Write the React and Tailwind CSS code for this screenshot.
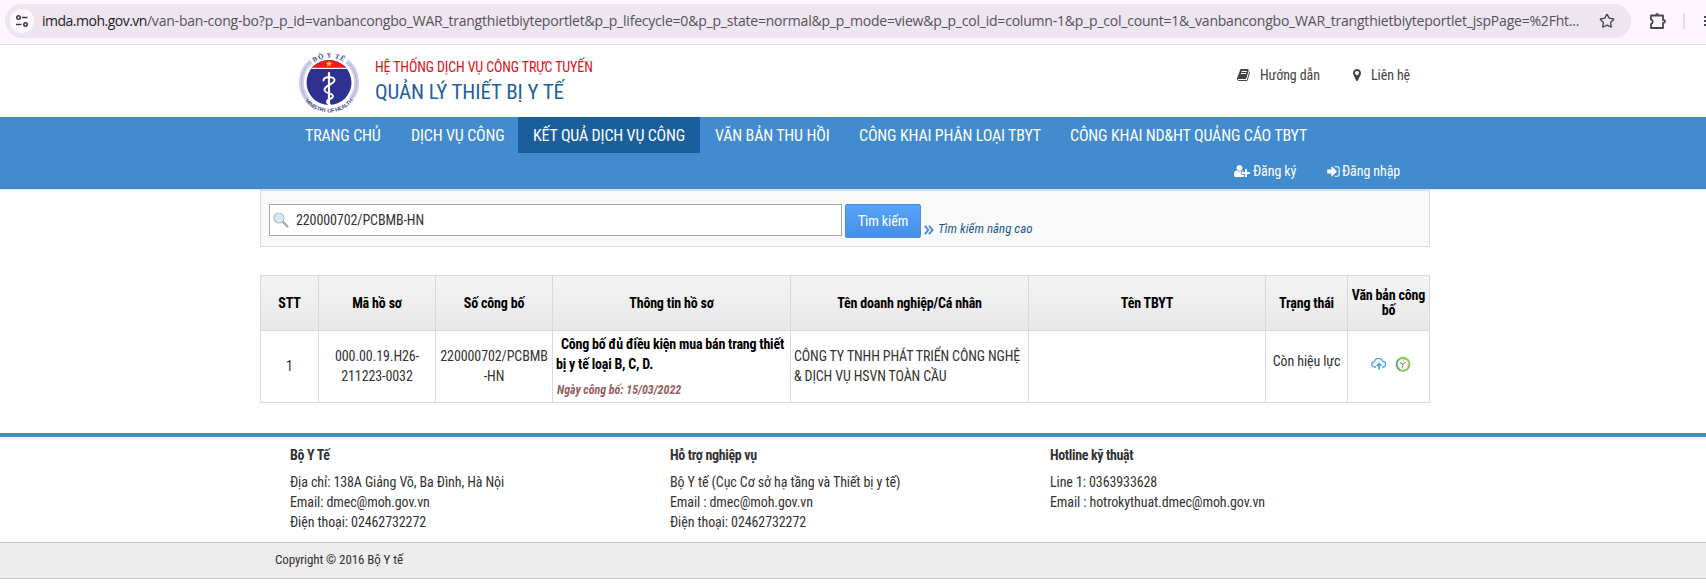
import { Star } from 'lucide-react';

const menu = [
  { label: 'TRANG CHỦ', cls: 'w-[106px]' },
  { label: 'DỊCH VỤ CÔNG', cls: 'w-[122px]' },
  { label: 'KẾT QUẢ DỊCH VỤ CÔNG', cls: 'w-[182px]', active: true },
  { label: 'VĂN BẢN THU HỒI', cls: 'w-[144px]' },
  { label: 'CÔNG KHAI PHÂN LOẠI TBYT', cls: 'w-[211px]' },
  { label: 'CÔNG KHAI ND&HT QUẢNG CÁO TBYT', cls: 'w-[267px]' },
];

const columns = [
  'STT',
  'Mã hồ sơ',
  'Số công bố',
  'Thông tin hồ sơ',
  'Tên doanh nghiệp/Cá nhân',
  'Tên TBYT',
  'Trạng thái',
  'Văn bản công bố',
];

const footerCols = [
  {
    title: 'Bộ Y Tế',
    lines: ['Địa chỉ: 138A Giảng Võ, Ba Đình, Hà Nội', 'Email: dmec@moh.gov.vn', 'Điện thoại: 02462732272'],
  },
  {
    title: 'Hỗ trợ nghiệp vụ',
    lines: ['Bộ Y tế (Cục Cơ sở hạ tầng và Thiết bị y tế)', 'Email : dmec@moh.gov.vn', 'Điện thoại: 02462732272'],
  },
  {
    title: 'Hotline kỹ thuật',
    lines: ['Line 1: 0363933628', 'Email : hotrokythuat.dmec@moh.gov.vn'],
  },
];

const grid = 'grid grid-cols-[58px_117px_117px_238px_238px_237px_82px_82px]';

function BookIcon() {
  return (
    <svg viewBox="0 0 1792 1792" className="w-[14px] h-[14px] fill-current">
      <path d="M1639 478q40 57 18 129l-275 906q-19 64-76.5 107.5t-122.5 43.5h-923q-77 0-148.5-53.5t-99.5-131.5q-24-67-2-127 0-4 3-27t4-37q1-8-3-21.5t-3-19.5q2-11 8-21t16.5-23.5 16.5-23.5q23-38 45-91.5t30-91.5q3-10 .5-30t-.5-28q3-11 17-28t17-23q21-36 42-92t25-90q1-9-2.5-32t.5-28q4-13 22-30.5t22-22.5q19-26 42.5-84.5t27.5-96.5q1-8-3-25.5t-2-26.5q2-8 9-18t18-23 17-21q8-12 16.5-30.5t15-35 16-36 19.5-32 26.5-23.5 36-11.5 47.5 5.5l-1 3q38-9 51-9h761q74 0 114 56t18 130l-274 906q-36 119-71.5 153.5t-128.5 34.5h-869q-27 0-38 15-11 16-1 43 24 70 144 70h923q29 0 56-15.5t35-41.5l300-987q7-22 5-57 38 15 59 43zm-1064 2q-4 13 2 22.5t20 9.5h608q13 0 25.5-9.5t16.5-22.5l21-64q4-13-2-22.5t-20-9.5h-608q-13 0-25.5 9.5t-16.5 22.5zm-83 256q-4 13 2 22.5t20 9.5h608q13 0 25.5-9.5t16.5-22.5l21-64q4-13-2-22.5t-20-9.5h-608q-13 0-25.5 9.5t-16.5 22.5z" />
    </svg>
  );
}

function MarkerIcon() {
  return (
    <svg viewBox="384 128 1024 1536" className="w-[8px] h-[12px] fill-current">
      <path d="M1152 640q0-106-75-181t-181-75-181 75-75 181 75 181 181 75 181-75 75-181zm256 0q0 109-33 179l-364 774q-16 33-47.5 52t-67.5 19-67.5-19-46.5-52l-365-774q-33-70-33-179 0-212 150-362t362-150 362 150 150 362z" />
    </svg>
  );
}

function UserPlusIcon() {
  return (
    <svg viewBox="0 0 2048 1792" className="w-[16px] h-[14px] fill-current">
      <path d="M704 896q-159 0-271.5-112.5t-112.5-271.5 112.5-271.5 271.5-112.5 271.5 112.5 112.5 271.5-112.5 271.5-271.5 112.5zm960 128h352q13 0 22.5 9.5t9.5 22.5v192q0 13-9.5 22.5t-22.5 9.5h-352v352q0 13-9.5 22.5t-22.5 9.5h-192q-13 0-22.5-9.5t-9.5-22.5v-352h-352q-13 0-22.5-9.5t-9.5-22.5v-192q0-13 9.5-22.5t22.5-9.5h352v-352q0-13 9.5-22.5t22.5-9.5h192q13 0 22.5 9.5t9.5 22.5v352zm-736 224q0 52 38 90t90 38h256v238q-68 50-171 50h-874q-121 0-194-69t-73-190q0-53 3.5-103.5t14-109 26.5-108.5 43-97.5 62-81 85.5-53.5 111.5-20q19 0 39 17 79 61 154.5 91.5t164.5 30.5 164.5-30.5 154.5-91.5q20-17 39-17 132 0 217 96h-223q-52 0-90 38t-38 90v192z" />
    </svg>
  );
}

function SignInIcon() {
  return (
    <svg viewBox="100 100 1600 1600" className="w-[13px] h-[13px] fill-current">
      <path d="M1312 896q0 26-19 45l-544 544q-19 19-45 19t-45-19-19-45v-288h-448q-26 0-45-19t-19-45v-384q0-26 19-45t45-19h448v-288q0-26 19-45t45-19 45 19l544 544q19 19 19 45zm352-352v704q0 119-84.5 203.5t-203.5 84.5h-320q-13 0-22.5-9.5t-9.5-22.5q0-4-1-20t-.5-26.5 3-23.5 10-19.5 20.5-6.5h320q66 0 113-47t47-113v-704q0-66-47-113t-113-47h-312l-11.5-1-11.5-3-8-5.5-7-9-2-13.5q0-4-1-20t-.5-26.5 3-23.5 10-19.5 20.5-6.5h320q119 0 203.5 84.5t84.5 203.5z" />
    </svg>
  );
}

function Logo() {
  return (
    <svg viewBox="0 0 64 64" className="w-[64px] h-[64px]">
      <defs>
        <path id="arcTop" d="M7 32.5 A25 25 0 0 1 57 32.5" />
        <path id="arcBottom" d="M2 32.5 A30 30 0 0 0 62 32.5" />
        <clipPath id="disc"><circle cx="32" cy="32.5" r="22.5" /></clipPath>
      </defs>
      {/* vòng cung hai bên */}
      <g fill="none" stroke="#d0d1e6">
        <path d="M14 11.500 A27.500 27.500 0 0 0 10 49" strokeWidth="5" />
        <path d="M50 11.500 A27.500 27.500 0 0 1 54 49" strokeWidth="5" />
      </g>
      <g fill="none" stroke="#a9abd2" strokeWidth=".9">
        <path d="M14 11.500 A27.500 27.500 0 0 0 10 49" />
        <path d="M50 11.500 A27.500 27.500 0 0 1 54 49" />
      </g>
      <g clipPath="url(#disc)">
        <rect width="64" height="64" fill="#2e3192" />
        <rect width="64" height="18" fill="#ed1c24" />
        <rect y="17.800" width="64" height="1.200" fill="#fff" />
      </g>
      <path fill="#fff200" d="M32 10.500l.8 2.200h2.400l-1.900 1.500.7 2.300-2-1.400-2 1.400.7-2.300-1.900-1.500h2.400z" />
      <path d="M32 23 V56" stroke="#fff" strokeWidth="2.200" strokeLinecap="round" />
      <path d="M26.500 30.500 C26 26.500 36 26 37.500 29.500 C39 34 27 35 27.500 40 C28 44 36.500 43 36 46.500 C35.500 49.500 29.500 49 30 52 C30.300 54 33 54 33 55" fill="none" stroke="#fff" strokeWidth="1.900" strokeLinecap="round" />
      <text fontSize="7" fontWeight="700" fill="#4a4d96" fontFamily="Liberation Serif, serif" letterSpacing=".6">
        <textPath href="#arcTop" startOffset="50%" textAnchor="middle">BỘ Y TẾ</textPath>
      </text>
      <text fontSize="5.500" fontWeight="700" fill="#4a4d96" fontFamily="Liberation Sans, sans-serif" letterSpacing="-.2">
        <textPath href="#arcBottom" startOffset="50%" textAnchor="middle">MINISTRY OF HEALTH</textPath>
      </text>
    </svg>
  );
}

function BrowserBar() {
  return (
    <div className="h-[45px] bg-[#fdf5fd] border-b border-[#e0dce4] flex items-start pt-1 pl-[5px] overflow-hidden">
      <div className="w-[1626px] h-[34px] shrink-0 rounded-full bg-[#ede5ef] flex items-center pl-[5px]">
        <div className="w-6 h-6 rounded-full bg-[#fdf8fd] flex items-center justify-center shrink-0">
          <svg viewBox="0 0 14 14" className="w-[14px] h-[14px]" fill="none" stroke="#3c3a40" strokeWidth="1.600">
            <circle cx="3.500" cy="3.500" r="1.700" />
            <path d="M7 3.500h5.500M1 10.500h5.500" />
            <circle cx="10.500" cy="10.500" r="1.700" />
          </svg>
        </div>
        <div className="ml-2 w-[1546px] shrink-0 whitespace-nowrap font-['Open_Sans',sans-serif] text-[14px] tracking-[-0.21px] text-[#55525a]">
          <span className="text-[#1f1d22] tracking-[-0.5px]">imda.moh.gov.vn</span>/van-ban-cong-bo?p_p_id=vanbancongbo_WAR_trangthietbiyteportlet&p_p_lifecycle=0&p_p_state=normal&p_p_mode=view&p_p_col_id=column-1&p_p_col_count=1&_vanbancongbo_WAR_trangthietbiyteportlet_jspPage=%2Fht...
        </div>
        <Star className="w-[16px] h-[16px] ml-[11px] text-[#47444c] shrink-0" />
      </div>
      <svg viewBox="0 0 18 18" className="w-[18px] h-[18px] ml-[18px] mt-2 shrink-0" fill="none" stroke="#47444c" strokeWidth="1.800">
        <path d="M2 3.500h12v4.500h0.500a1.400 1.400 0 0 1 0 2.800H14V16H2v-4a2.400 2.400 0 0 0 0-4.600z" strokeLinejoin="round" />
        <path d="M6.300 2.800a1.700 1.700 0 0 1 3.400 0z" fill="#47444c" stroke="none" />
      </svg>
      <div className="w-[2px] h-4 ml-[16px] mt-[9px] bg-[#e9d9ec] shrink-0" />
      <div className="ml-[19px] mt-3 w-3 h-[10px] border-y-2 border-[#47444c] shrink-0 flex items-center">
        <div className="w-3 h-[2px] bg-[#47444c]" />
      </div>
    </div>
  );
}

export default function App() {
  return (
    <div className="w-[1706px] h-[586px] overflow-hidden bg-white font-['Roboto_Condensed','Roboto',sans-serif] text-[14px] leading-5 tracking-[-0.1px] text-[#333]">
      <BrowserBar />

      {/* Header */}
      <div className="h-[72px] pl-[297px] flex">
        <div className="pt-[5px]"><Logo /></div>
        <div className="ml-[14px] pt-[12px] w-[862px] whitespace-nowrap tracking-[-0.13px]">
          <div className="leading-5 text-[#e0101c]">HỆ THỐNG DỊCH VỤ CÔNG TRỰC TUYẾN</div>
          <div className="text-[21px] leading-[30px] tracking-[-0.08px] text-[#23609a]">QUẢN LÝ THIẾT BỊ Y TẾ</div>
        </div>
        <div className="flex items-center h-5 mt-5 text-[#444] whitespace-nowrap">
          <div className="w-[23px]"><BookIcon /></div>
          <div className="w-[93px]">Hướng dẫn</div>
          <div className="w-[18px]"><MarkerIcon /></div>
          <div>Liên hệ</div>
        </div>
      </div>

      {/* Menu */}
      <div className="h-[73px] bg-[#428bce] border-b border-[#d3e5f5] text-white">
        <div className="flex h-9 pl-[290px] text-[16px] leading-[37px] tracking-[-0.16px] whitespace-nowrap">
          {menu.map(m => (
            <div key={m.label} className={`${m.cls} h-9 pl-[15px] ${m.active ? 'bg-[#1a5f9c]' : ''}`}>{m.label}</div>
          ))}
        </div>
        <div className="flex h-9 items-center pl-[1234px] whitespace-nowrap">
          <div className="w-[19px]"><UserPlusIcon /></div>
          <div className="w-[74px]">Đăng ký</div>
          <div className="w-[15px]"><SignInIcon /></div>
          <div>Đăng nhập</div>
        </div>
      </div>

      <div className="w-[1170px] ml-[260px]">
        {/* Tìm kiếm */}
        <div className="h-[57px] bg-[#f9f9f9] border border-[#ddd] pt-[13px] pl-2 flex items-start">
          <div className="w-[573px] h-8 bg-white border border-[#a9a9a9] flex items-center">
            <svg viewBox="0 0 16 16" className="w-4 h-4 ml-[3px]">
              <path d="M10 10l4.500 4.500" stroke="#8a8a8a" strokeWidth="2" strokeLinecap="round" />
              <path d="M10 10l4.300 4.300" stroke="#e4e0da" strokeWidth=".7" strokeLinecap="round" />
              <circle cx="6" cy="6" r="5" fill="#d5e8f6" stroke="#b4bcc4" strokeWidth="1.200" />
            </svg>
            <div className="ml-[7px]">220000702/PCBMB-HN</div>
          </div>
          <button className="ml-[3px] w-[76px] h-[34px] rounded-[2px] border border-[#4a8fdc] bg-linear-to-b from-[#55a5fb] to-[#4590e6] text-white">Tìm kiếm</button>
          <svg viewBox="0 0 10 10" className="w-[10px] h-[10px] ml-[3px] mt-[21px]" fill="none" stroke="#4f86cc" strokeWidth="1.900">
            <path d="M.8 .8l3.600 4.200-3.600 4.200M5 .8l3.600 4.200L5 9.200" />
          </svg>
          <div className="ml-1 mt-[15px] text-[13px] tracking-normal italic text-[#1c5a8c]">Tìm kiếm nâng cao</div>
        </div>

        {/* Kết quả */}
        <div className="mt-[28px] border-t border-l border-[#d9d9d9] w-[1170px]">
          <div className={`${grid} h-[55px] bg-linear-to-b from-[#f4f4f4] to-[#e8e8e8] border-b border-[#d9d9d9]`}>
            {columns.map(c => (
              <div key={c} className="flex items-center justify-center border-r border-[#d9d9d9] text-center font-bold leading-[15px] text-black tracking-[-0.18px]">{c}</div>
            ))}
          </div>
          <div className={`${grid} h-[72px] border-b border-[#d9d9d9] *:border-r *:border-[#d9d9d9]`}>
            <div className="flex items-center justify-center pb-[2px]">1</div>
            <div className="flex items-center justify-center text-center pb-px">000.00.19.H26-<br />211223-0032</div>
            <div className="flex items-center justify-center text-center pb-px">220000702/PCBMB<br />-HN</div>
            <div className="pl-[3px] pt-[3px] whitespace-nowrap">
              <div className="font-bold text-black tracking-[-0.21px]">
                <span className="pl-[5px]">Công bố đủ điều kiện mua bán trang thiết</span><br />bị y tế loại B, C, D.
              </div>
              <div className="mt-[6px] pl-px text-[12px] tracking-normal font-bold italic text-[#965f5f]">Ngày công bố: 15/03/2022</div>
            </div>
            <div className="pl-[3px] pb-px flex items-center whitespace-nowrap tracking-[-0.13px]">CÔNG TY TNHH PHÁT TRIỂN CÔNG NGHỆ<br />& DỊCH VỤ HSVN TOÀN CẦU</div>
            <div />
            <div className="flex items-center justify-center pb-[11px]">Còn hiệu lực</div>
            <div className="flex items-center pl-[23px] gap-2 pb-[5px]">
              <svg viewBox="0 0 16 12" className="w-4 h-3" fill="none" stroke="#45a4e6" strokeWidth="1.300">
                <path d="M5 9H3.500a2.600 2.600 0 0 1-.3-5.200A4.600 4.600 0 0 1 12 3.500 2.800 2.800 0 0 1 12.500 9H11" />
                <path d="M8 11.500V6M5.800 7.800L8 5.500l2.200 2.300" strokeWidth="1.700" />
              </svg>
              <svg viewBox="0 0 16 16" className="w-4 h-4" fill="none">
                <circle cx="8" cy="8.300" r="6.500" fill="#f2f7f3" stroke="#8ac555" strokeWidth="2" />
                <path d="M3.500 4a6.500 6.500 0 0 0 1.500 10" stroke="#6f9fae" strokeWidth="1.600" />
                <path d="M8 0l3.500 2.600L8 5z" fill="#9bd04b" />
                <path d="M5 6.500L8 8.500l2.500-2.500M8 8.500l-1 3" stroke="#666" strokeWidth=".9" />
              </svg>
            </div>
          </div>
        </div>
      </div>

      {/* Footer */}
      <div className="mt-[30px] h-[109px] border-t-4 border-[#428bca] pl-[290px] pt-2 flex whitespace-nowrap">
        {footerCols.map(col => (
          <div key={col.title} className="w-[380px]">
            <div className="font-bold tracking-[-0.35px] mb-[7px]">{col.title}</div>
            {col.lines.map(line => <div key={line}>{line}</div>)}
          </div>
        ))}
      </div>
      <div className="h-[37px] bg-[#ededed] border-y border-[#c8c8c8] pl-[275px] text-[13px] leading-[34px]">Copyright © 2016 Bộ Y tế</div>
    </div>
  );
}
